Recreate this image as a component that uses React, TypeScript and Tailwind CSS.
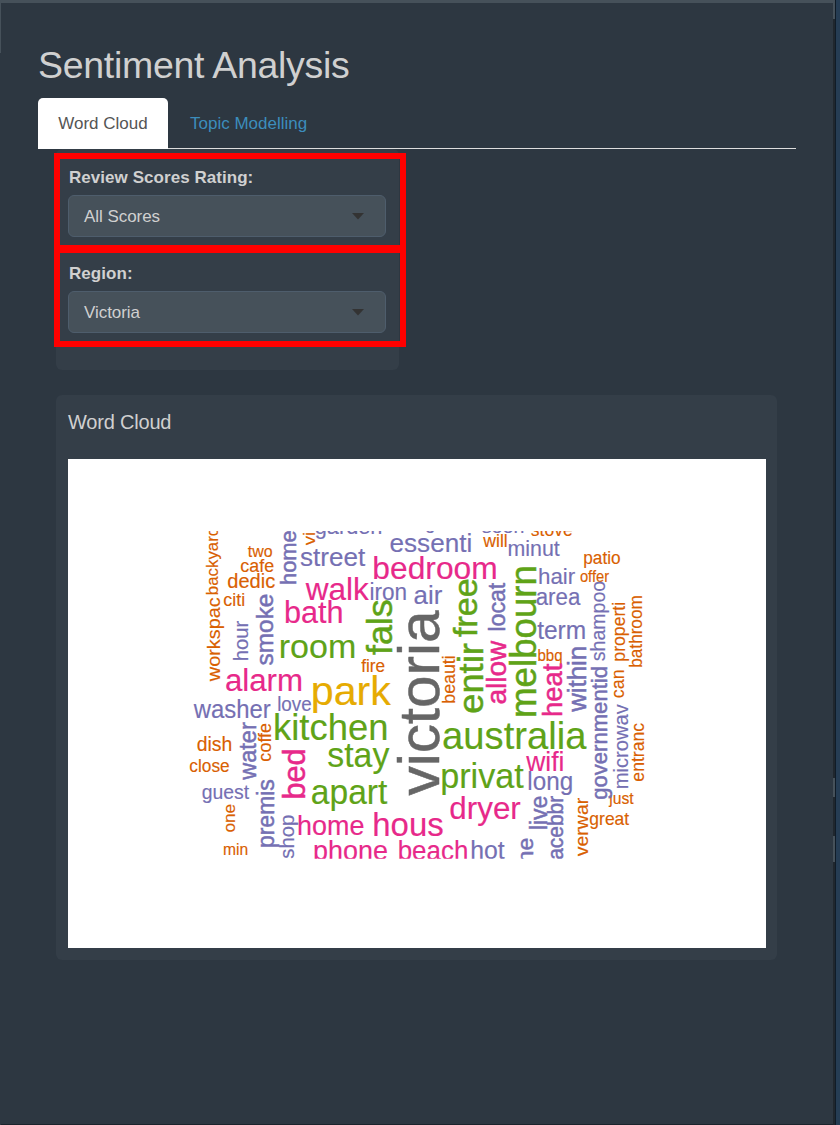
const O = "#d95f02";
const P = "#7570b3";
const K = "#e7298a";
const G = "#5fa318";
const Y = "#e6ab02";
const D = "#666666";

type Word = [text: string, start: number, end: number, baseline: number, size: number, color: string];

// start / end are the left and right edges of the word
const across: Word[] = [
  ["two", 248, 272, 557, 16, O],
  ["cafe", 241, 273.5, 571.5, 18, O],
  ["dedic", 228, 274.5, 587.5, 20, O],
  ["citi", 224, 244, 606, 18, O],
  ["alarm", 226, 301, 691, 31, K],
  ["room", 281, 354, 658, 34, G],
  ["bath", 286, 341.5, 622.5, 31, K],
  ["walk", 306, 368.5, 599.5, 31.5, K],
  ["street", 301, 365, 565.5, 26, P],
  ["essenti", 390.5, 470.5, 552, 26, P],
  ["bedroom", 374.5, 495.5, 579, 32, K],
  ["iron", 371, 405.5, 599.5, 23, P],
  ["air", 414.5, 442, 604, 26, P],
  ["will", 483.5, 506.5, 547, 18.5, O],
  ["minut", 509, 559.5, 556, 22.5, P],
  ["patio", 584.5, 620, 564, 18, O],
  ["offer", 580.5, 609, 581.5, 16.5, O],
  ["hair", 539.5, 575, 583.5, 22.5, P],
  ["area", 536.5, 579.5, 604.5, 23, P],
  ["term", 537.5, 584.5, 638.5, 25, P],
  ["bbq", 538.5, 561.5, 661, 16, O],
  ["fire", 361.5, 384.5, 672, 18, O],
  ["park", 313.5, 390.5, 705, 40.5, Y],
  ["love", 278.5, 311, 711, 19.5, P],
  ["washer", 194, 270.5, 718, 25, P],
  ["kitchen", 275.5, 386, 740, 36.5, G],
  ["dish", 197.5, 231, 751, 20, O],
  ["close", 190, 229, 772, 18, O],
  ["stay", 328.5, 389, 767, 34.5, G],
  ["guest", 202.5, 249, 799, 20.5, P],
  ["apart", 312, 387, 803.5, 34.5, G],
  ["min", 224, 247, 855, 16.5, O],
  ["home", 299, 363.5, 835, 28, K],
  ["hous", 374.5, 442.5, 836, 33, K],
  ["phone", 315, 387, 860, 28, K],
  ["beach", 399.5, 466.5, 860, 27, K],
  ["hot", 472, 504.5, 858.5, 26, P],
  ["australia", 443.5, 585, 748.5, 38.5, G],
  ["wifi", 526.5, 562.5, 770.5, 28, K],
  ["privat", 442.5, 523.5, 787.5, 34.5, G],
  ["long", 529, 571.5, 790, 25, P],
  ["dryer", 450.5, 520.5, 819, 31.5, K],
  ["just", 609.5, 633.5, 804, 17, O],
  ["great", 590, 629, 824.5, 18.5, O],
  ["garden", 315.5, 381, 534, 22, P],
  ["g", 426, 434, 528.5, 20, P],
  ["seen", 482.5, 523, 532.5, 19, P],
  ["stove", 531.5, 572, 535.5, 18, O],
];

// start / end are the bottom and top edges, baseline is an x position
const upward: Word[] = [
  ["backyard", 594, 528, 217.5, 17, O],
  ["workspac", 681, 598, 220, 19, O],
  ["hour", 660, 621, 248, 20, P],
  ["smoke", 664.5, 594.5, 272.5, 24.5, P],
  ["home", 583.5, 531, 295.5, 22.5, P],
  ["vi", 545, 533, 315, 17, O],
  ["fals", 654.5, 600.5, 392, 35, G],
  ["free", 636.5, 579.5, 476.5, 33.5, G],
  ["victoria", 795, 612.5, 438.5, 58, D],
  ["beauti", 702.5, 656.5, 455, 17.5, O],
  ["entir", 712.5, 643.5, 482.5, 35, G],
  ["allow", 703.5, 641, 506, 28.5, K],
  ["locat", 630, 583, 505, 24, P],
  ["melbourn", 715.5, 567.5, 535.5, 36.5, G],
  ["heat", 715, 664, 562, 28, K],
  ["within", 711.5, 647.5, 585.5, 25, P],
  ["shampoo", 660.5, 581.5, 605, 20, P],
  ["governmentid", 799, 667.5, 606.5, 22.5, P],
  ["properti", 660.5, 603, 625, 17.5, O],
  ["can", 697.5, 670.5, 623.5, 17.5, O],
  ["bathroom", 666.5, 596.5, 642, 17.5, O],
  ["microwav", 788, 704.5, 628, 20, P],
  ["entranc", 781, 723.5, 644, 17.5, O],
  ["water", 779.5, 722.5, 256, 24.5, P],
  ["coffe", 761, 723.5, 271, 17.5, O],
  ["bed", 797.5, 750.5, 305, 30.5, K],
  ["premis", 846.5, 780, 273.5, 23, P],
  ["shop", 858, 815.5, 294, 20, P],
  ["one", 832, 804.5, 235, 17, O],
  ["live", 828.5, 796.5, 546.5, 23.5, P],
  ["acebbr", 859, 796, 563, 22, P],
  ["ne", 862, 838.5, 533, 21.5, P],
  ["verwar", 856, 798, 588, 19, O],
];

function bearing(ch: string, side: "l" | "r") {
  if ("vwy".includes(ch)) return 0.01;
  if (side === "l") return "bhklmnpriu".includes(ch) ? 0.067 : "ftj".includes(ch) ? 0.015 : 0.036;
  return "hmnudilqg".includes(ch) ? 0.067 : "fkrtx".includes(ch) ? 0.01 : 0.036;
}

function CloudWord({ word, vertical }: { word: Word; vertical?: boolean }) {
  const [text, start, end, base, size, color] = word;
  const left = bearing(text[0], "l") * size;
  const right = bearing(text[text.length - 1], "r") * size;
  const length = Math.abs(end - start) + left + right;
  const heavy = vertical && size > 20.5;
  return (
    <text
      transform={vertical ? `translate(${base} ${start + left}) rotate(-90)` : `translate(${start - left} ${base})`}
      fontSize={size}
      fill={color}
      stroke={color}
      strokeWidth={heavy ? 0.5 : 0.15}
      textLength={length}
      lengthAdjust="spacingAndGlyphs"
    >
      {text}
    </text>
  );
}

function Cloud() {
  return (
    <svg
      viewBox="68 459 698 489"
      className="block h-[489px] w-[698px] bg-white font-['Liberation_Sans',Arial,sans-serif]"
    >
      <defs>
        <clipPath id="plot">
          <rect x="180" y="531" width="480" height="327.7" />
        </clipPath>
      </defs>
      <g clipPath="url(#plot)">
        {across.map((w) => (
          <CloudWord key={w[0]} word={w} />
        ))}
        {upward.map((w) => (
          <CloudWord key={w[0]} word={w} vertical />
        ))}
      </g>
    </svg>
  );
}

function Picker({ label, value }: { label: string; value: string }) {
  return (
    <>
      <div className="pl-px text-[17px] leading-6 font-bold tracking-[0.05px] text-[#d0d0d0]">{label}</div>
      <button className="mt-[5px] flex h-[42px] w-[318px] items-center justify-between rounded-md border border-[#4e5d6c] bg-[#46515a] pr-[21px] pl-[15px] text-[17px] tracking-[-0.05px] text-[#d0d0d0]">
        <span className="pt-[2px]">{value}</span>
        <svg viewBox="0 0 12 7" className="h-[7px] w-3">
          <path d="M0 0H12L6 6.5Z" fill="#333333" />
        </svg>
      </button>
    </>
  );
}

export default function App() {
  return (
    <div className="flex h-[1125px] w-[840px] overflow-hidden bg-[#2d3741] font-['Liberation_Sans',Arial,sans-serif]">
      <div className="h-[53px] w-px bg-[#46515a]" />
      <main className="w-[832px] border-t-[3px] border-b border-t-[#46515a] border-b-[#1b242c] pl-[37px]">
        <h1 className="mt-[39px] h-[47px] text-[37.5px] leading-[46px] tracking-[-0.3px] text-[#d0d0d0]">
          Sentiment Analysis
        </h1>
        <nav className="mt-[9px] flex h-[51px] w-[758px] border-b border-[#dddddd] text-[17px]">
          <div className="flex h-[51px] w-[130px] items-center justify-center rounded-t-[5px] bg-white text-[#555555]">
            Word Cloud
          </div>
          <div className="flex h-[52px] items-center pl-[22px] text-[#3c8dbc]">Topic Modelling</div>
        </nav>
        <section className="relative ml-[18px] h-[221px] w-[343px] rounded-md bg-[#343e48] pl-[12px]">
          <div className="h-[97px] pt-[17px]">
            <Picker label="Review Scores Rating:" value="All Scores" />
          </div>
          <div className="h-[96px] pt-[16px]">
            <Picker label="Region:" value="Victoria" />
          </div>
          <div className="absolute top-[4px] left-[-2px] h-[98px] w-[352px] border-6 border-[#ff0000]" />
          <div className="absolute top-[98px] left-[-2px] h-[100px] w-[352px] border-6 border-[#ff0000]" />
        </section>
        <section className="mt-[25px] ml-[18px] h-[565px] w-[721px] rounded-md bg-[#343e48] pl-[12px]">
          <h2 className="h-[64px] pt-[14px] text-[20px] leading-[26px] tracking-[-0.2px] text-[#d0d0d0]">
            Word Cloud
          </h2>
          <Cloud />
        </section>
      </main>
      <div className="flex w-[2px] flex-col bg-[#20272e]">
        <div className="h-[19px] bg-[#46515a]" />
        <div className="mt-[759px] h-[19px] bg-[#46515a]" />
        <div className="mt-[39px] h-[26px] bg-[#46515a]" />
      </div>
      <div className="w-px bg-[#101c28]" />
      <div className="grow bg-[#263d54]" />
    </div>
  );
}
